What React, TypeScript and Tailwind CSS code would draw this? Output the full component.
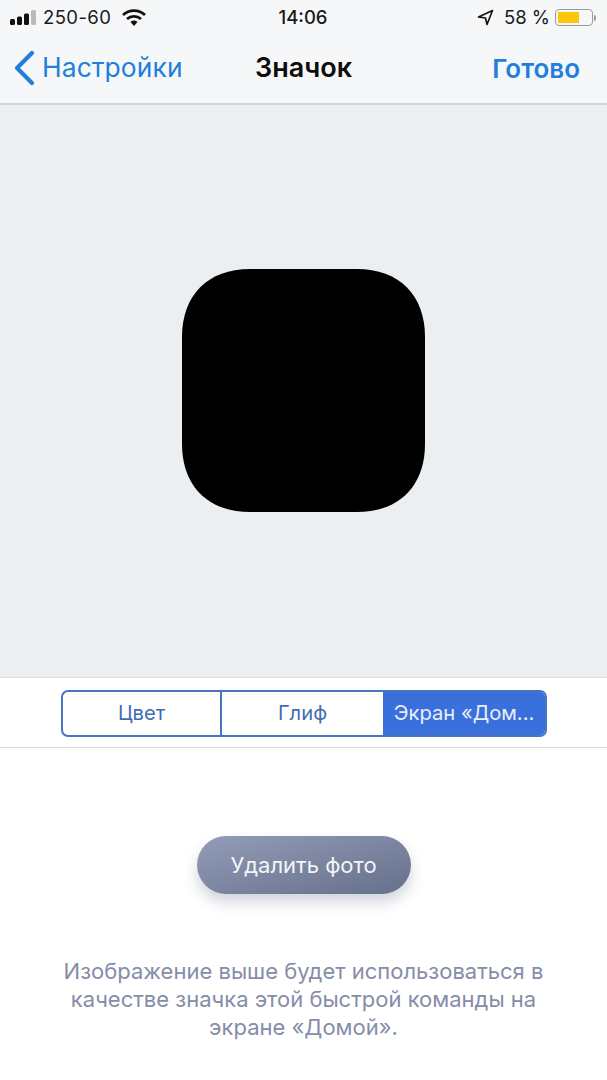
export default function App() {
  return (
    <div className="flex h-[1080px] w-[607px] flex-col overflow-hidden bg-white font-['Inter','Noto_Sans',sans-serif]">
      {/* Status + nav bar */}
      <div className="h-[105px] shrink-0 border-b-2 border-[#d3d4d6] bg-[#f6f7f9]">
        <div className="flex h-[34px] items-center justify-between pl-[10px] pr-[11px] pt-[1px] text-[18.5px] text-[#1a1a1a]">
          <div className="flex w-[200px] items-center">
            <svg width="29" height="15" viewBox="0 0 29 15" className="mr-[4px]">
              <rect x="0" y="9" width="5" height="6" rx="1.5" fill="#111" />
              <rect x="7" y="6.5" width="5" height="8.5" rx="1.5" fill="#111" />
              <rect x="14" y="3.5" width="5" height="11.5" rx="1.5" fill="#111" />
              <rect x="21" y="0" width="5" height="15" rx="1.5" fill="#b9babc" />
            </svg>
            <span className="tracking-[0.4px]">250-60</span>
            <svg width="24" height="17" viewBox="0 0 24 17" className="ml-[11px]">
              <path d="M1 6 A16 16 0 0 1 23 6" fill="none" stroke="#111" strokeWidth="2.8" />
              <path d="M5 10 A10.5 10.5 0 0 1 19 10" fill="none" stroke="#111" strokeWidth="2.8" />
              <path d="M8.5 13 L12 17 L15.5 13 A5 5 0 0 0 8.5 13 Z" fill="#111" />
            </svg>
          </div>
          <span className="font-medium">14:06</span>
          <div className="flex w-[200px] items-center justify-end">
            <svg width="17" height="17" viewBox="0 0 17 17" className="mr-[10px]">
              <path d="M15.5 1.5 L1.5 8 L8.5 9 L10 15.5 Z" fill="none" stroke="#111" strokeWidth="1.6" strokeLinejoin="round" />
            </svg>
            <span>58 %</span>
            <div className="ml-[5px] flex h-[17px] w-[38px] items-center rounded-[4px] border border-[#9a9a9a] p-[2px]">
              <div className="h-[11px] w-[21px] bg-[#fcc60a]" />
            </div>
            <div className="ml-[1px] h-[6px] w-[2px] rounded-r-sm bg-[#9a9a9a]" />
          </div>
        </div>
        <div className="flex h-[68px] items-center justify-between pl-[14px] pr-[27px]">
          <div className="flex w-[213px] items-center text-[#1f7fdc]">
            <svg width="22" height="36" viewBox="0 0 22 36" className="mr-[6px]">
              <path d="M18 3 L3 18 L18 33" fill="none" stroke="#1f7fdc" strokeWidth="4.2" strokeLinecap="round" strokeLinejoin="round" />
            </svg>
            <span className="text-[26.4px] tracking-[0.1px]">Настройки</span>
          </div>
          <span className="pt-[1px] text-[27px] font-semibold text-[#0d0d0d]">Значок</span>
          <span className="w-[200px] text-right text-[26px] font-semibold text-[#1f7fdc]">Готово</span>
        </div>
      </div>

      {/* Icon preview */}
      <div className="flex h-[572px] shrink-0 items-center justify-center bg-[#ebeff2] pb-[2px]">
        <svg width="243" height="243" viewBox="0 0 243 243">
          <path
            d="M68 0 H175 C217 0 243 26 243 68 V175 C243 217 217 243 175 243 H68 C26 243 0 217 0 175 V68 C0 26 26 0 68 0 Z"
            fill="#000"
          />
        </svg>
      </div>

      {/* Segmented control */}
      <div className="flex h-[71px] shrink-0 items-center justify-center border-y border-[#d9dcdf] bg-white pt-[1px] pl-[1px]">
        <div className="flex h-[47px] w-[486px] overflow-hidden rounded-[7px] border-2 border-[#4675bd] text-[20.2px]">
          <div className="flex w-[159px] items-center justify-center border-r-2 border-[#4675bd] text-[#3f6db3]">Цвет</div>
          <div className="flex w-[161px] items-center justify-center text-[#3f6db3]">Глиф</div>
          <div className="flex flex-1 items-center justify-center whitespace-nowrap bg-[#3a70dc] text-[#e8eefa]">Экран «Дом...</div>
        </div>
      </div>

      {/* Delete photo */}
      <div className="flex flex-1 flex-col items-center pt-[88px]">
        <div className="flex h-[58px] w-[214px] items-center justify-center rounded-full bg-gradient-to-br from-[#949db8] to-[#65708a] text-[22px] text-[#f4f5f8] shadow-[0_8px_14px_rgba(90,100,130,0.28)]">
          Удалить фото
        </div>
        <p className="mt-[63px] w-[540px] text-center text-[22px] leading-[28px] text-[#858da8]">
          Изображение выше будет использоваться в качестве значка этой быстрой команды на экране «Домой».
        </p>
      </div>
    </div>
  )
}
